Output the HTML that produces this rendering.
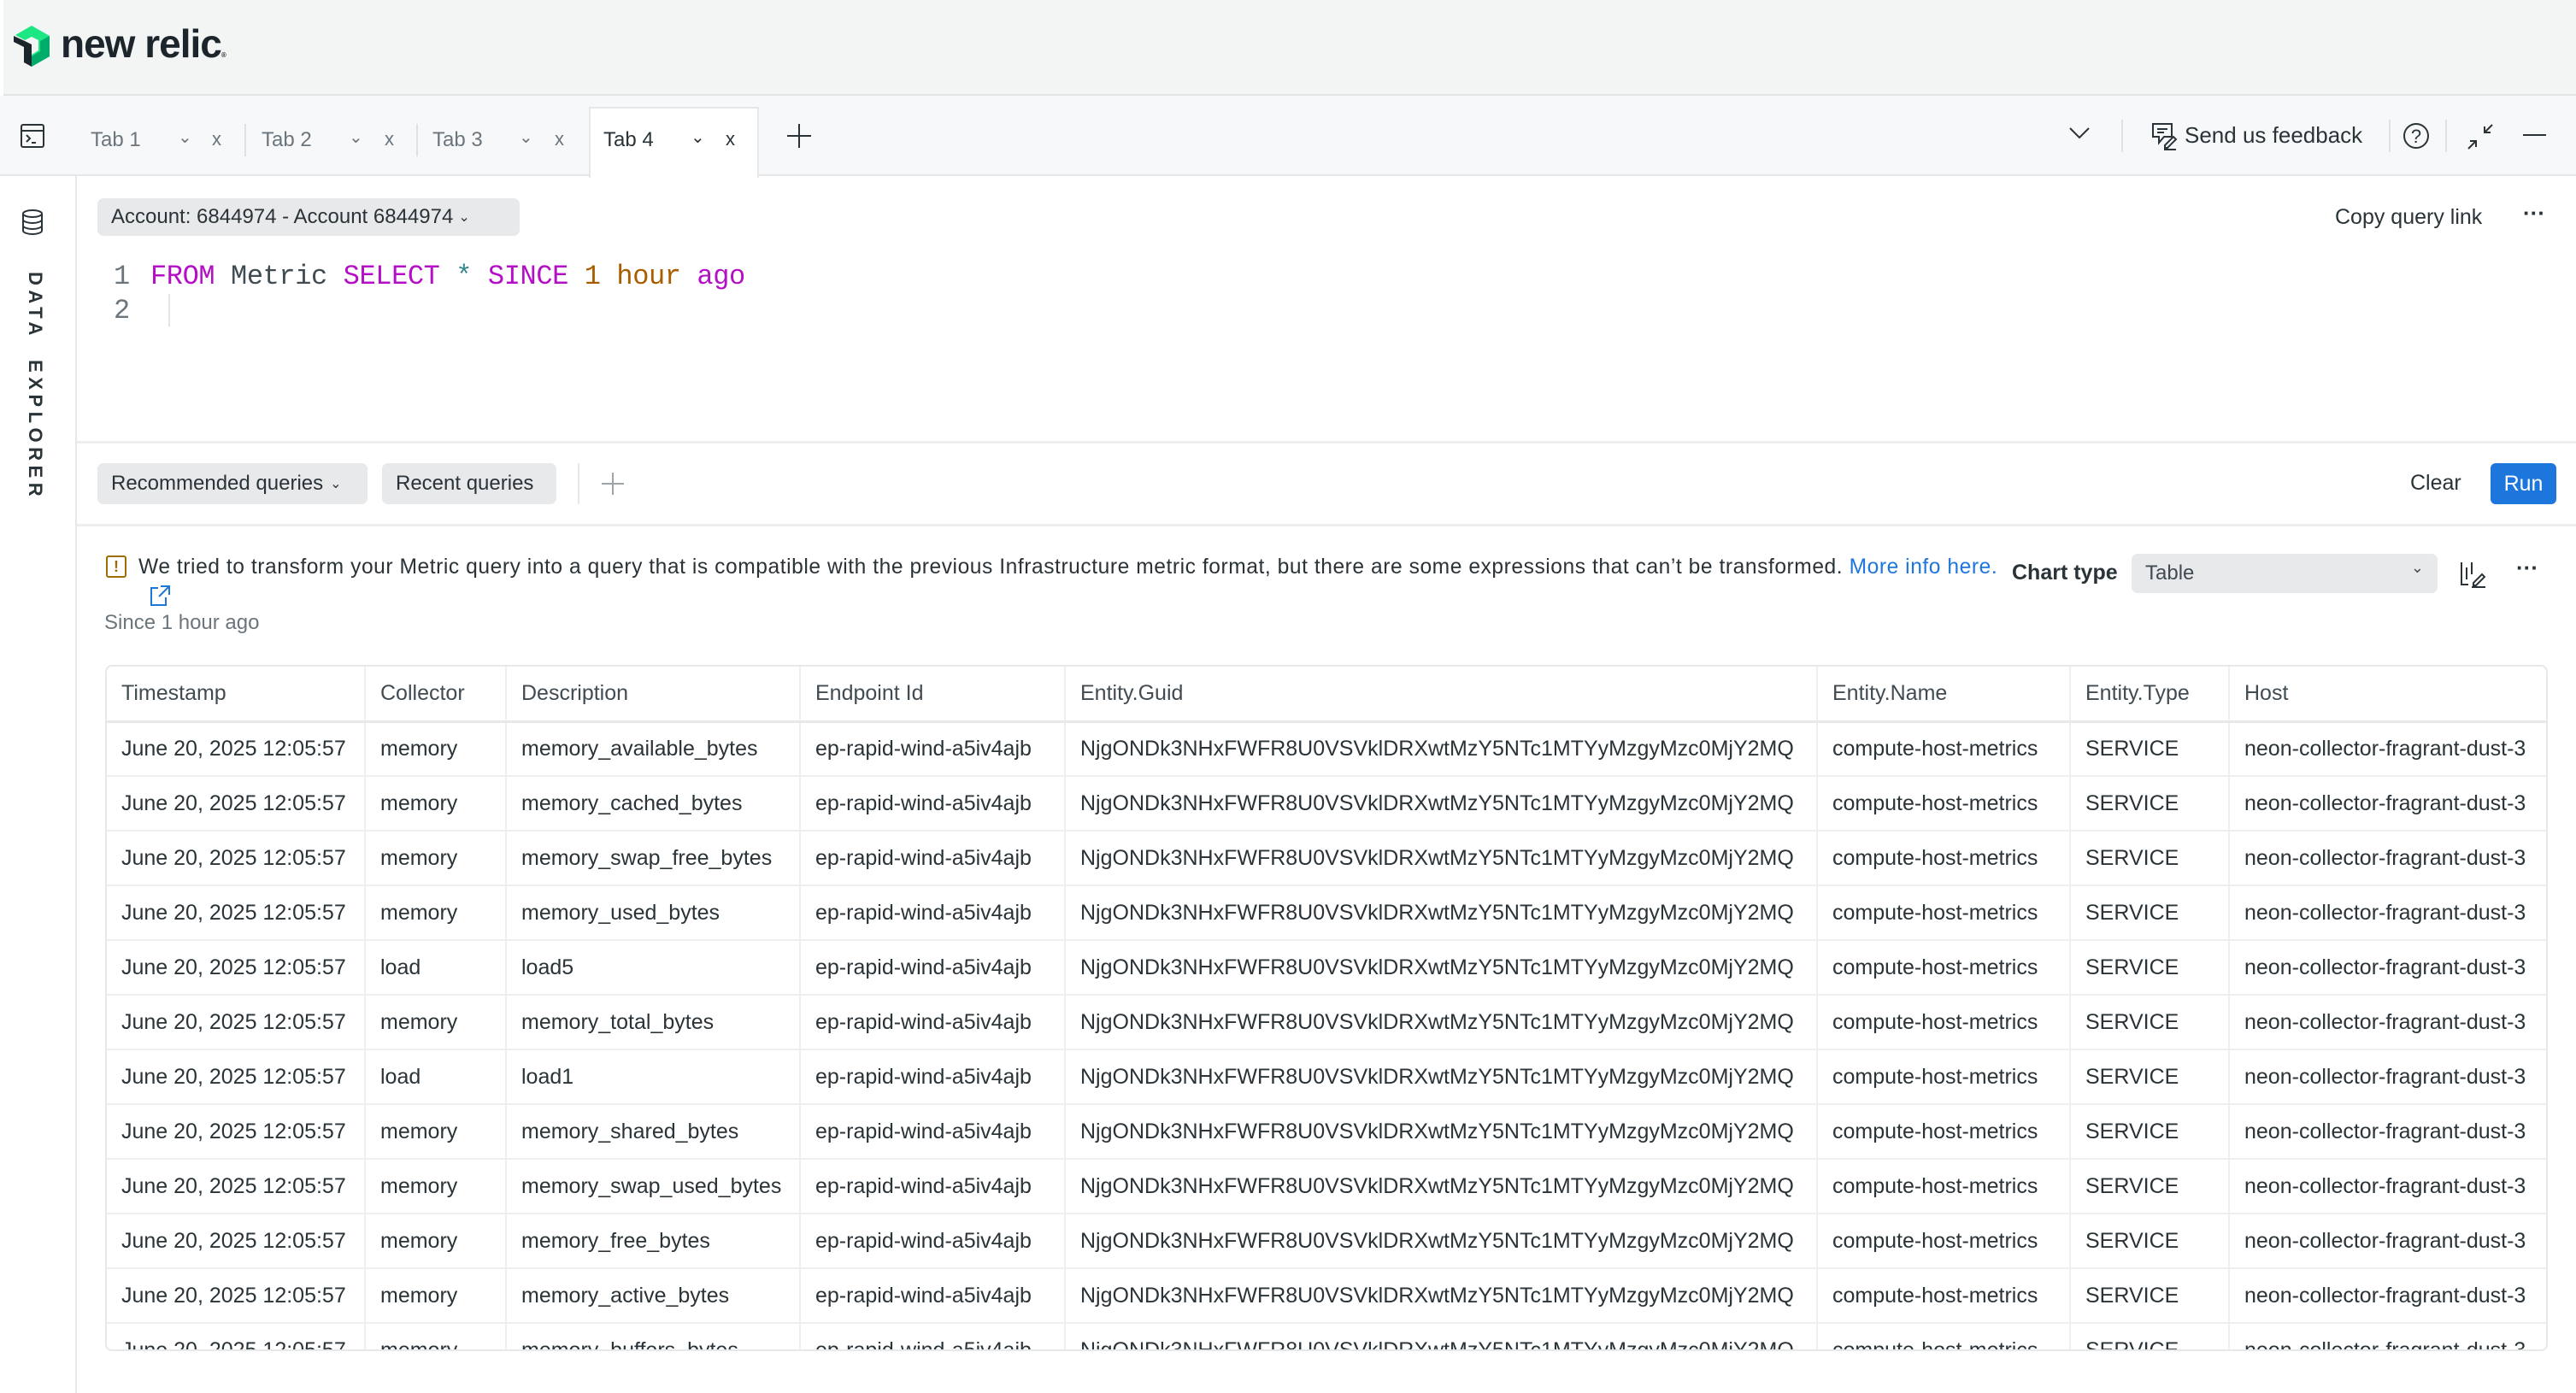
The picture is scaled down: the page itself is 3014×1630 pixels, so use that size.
<!DOCTYPE html>
<html><head><meta charset="utf-8"><style>
*{box-sizing:border-box;margin:0;padding:0}
body{width:3014px;height:1630px;overflow:hidden;background:#fff;font-family:"Liberation Sans",sans-serif;color:#293338;position:relative}
.a{position:absolute;white-space:nowrap}
.top{position:absolute;left:0;top:0;width:3014px;height:112px;background:#f3f4f4;border-bottom:2px solid #e3e4e4}
.tabs{position:absolute;left:0;top:112px;width:3014px;height:94px;background:#f7f8f9;border-bottom:2px solid #e6e7e8}
.tab{font-size:24px;color:#6b757c;top:150px}
.sep{position:absolute;width:2px;background:#dfe1e2}
.pill{position:absolute;background:#e8e9ea;border-radius:7px;font-size:24px;color:#293338;display:flex;align-items:center}
.mono{font-family:"Liberation Mono",monospace;font-size:32px}
table{border-collapse:collapse;font-size:25px;color:#293338}
td{height:64px;padding:0 0 0 17px;border-right:2px solid #eef0f0;border-bottom:2px solid #eef0f0;white-space:nowrap;overflow:hidden}
tr.h td{color:#414b52;border-bottom:3px solid #e6e8e9}
</style></head><body>
<div class="top"></div>
<div class="a" style="left:0;top:0;width:4px;height:1630px;background:#fff"></div>
<svg class="a" style="left:14px;top:28px" width="46" height="52" viewBox="0 0 46 52">
<polygon points="23,2 44,14 44,38 23,50 23,36 31,31 31,19 23,15 15,19 4,13" fill="#1ce783"/>
<polygon points="23,50 44,38 44,14 33,20 33,32 23,38" fill="#00ac69"/>
<polygon points="2,14 15,20 23,24 23,50 14,45 14,27 2,21" fill="#1d252c"/>
</svg>
<div class="a" style="left:71px;top:24px;font-size:46px;font-weight:bold;color:#1d252c;letter-spacing:-1px">new relic<span style="font-size:8px">®</span></div>

<div class="tabs"></div>
<svg class="a" style="left:22px;top:143px" width="32" height="32" viewBox="0 0 32 32" fill="none" stroke="#293338" stroke-width="2"><rect x="3" y="3" width="26" height="26" rx="2"/><line x1="3" y1="10" x2="29" y2="10"/><polyline points="9,15 13,19 9,23"/><line x1="15" y1="24" x2="20" y2="24"/></svg>
<div class="a tab" style="left:106px">Tab 1</div><div class="a tab" style="left:208px;font-size:20px;top:148px">⌄</div><div class="a tab" style="left:248px;font-size:22px">x</div>
<div class="sep" style="left:286px;top:145px;height:38px"></div>
<div class="a tab" style="left:306px">Tab 2</div><div class="a tab" style="left:408px;font-size:20px;top:148px">⌄</div><div class="a tab" style="left:450px;font-size:22px">x</div>
<div class="sep" style="left:487px;top:145px;height:38px"></div>
<div class="a tab" style="left:506px">Tab 3</div><div class="a tab" style="left:607px;font-size:20px;top:148px">⌄</div><div class="a tab" style="left:649px;font-size:22px">x</div>
<div class="a" style="left:689px;top:125px;width:199px;height:83px;background:#fff;border:2px solid #e6e7e8;border-bottom:none"></div>
<div class="a tab" style="left:706px;color:#293338">Tab 4</div><div class="a tab" style="left:808px;font-size:20px;top:148px;color:#293338">⌄</div><div class="a tab" style="left:849px;font-size:22px;color:#293338">x</div>
<svg class="a" style="left:920px;top:144px" width="30" height="30"><path d="M15 1V29M1 15H29" stroke="#293338" stroke-width="2"/></svg>

<svg class="a" style="left:2420px;top:148px" width="26" height="16"><path d="M2 2L13 13L24 2" fill="none" stroke="#293338" stroke-width="2"/></svg>
<div class="sep" style="left:2482px;top:140px;height:38px"></div>
<svg class="a" style="left:2516px;top:142px" width="34" height="34" viewBox="0 0 34 34" fill="none" stroke="#293338" stroke-width="2"><path d="M3 3H25V18H16L10 25V18H3Z"/><line x1="8" y1="9" x2="20" y2="9"/><line x1="8" y1="13" x2="16" y2="13"/><path d="M17 28L27 18L30 21L20 31H17Z"/><line x1="16" y1="33" x2="30" y2="33"/></svg>
<div class="a" style="left:2556px;top:143px;font-size:26px">Send us feedback</div>
<div class="sep" style="left:2795px;top:140px;height:38px"></div>
<svg class="a" style="left:2811px;top:143px" width="32" height="32"><circle cx="16" cy="16" r="14" fill="none" stroke="#293338" stroke-width="2"/><text x="16" y="24" font-size="22" text-anchor="middle" fill="#293338" font-family="Liberation Sans">?</text></svg>
<div class="sep" style="left:2861px;top:140px;height:38px"></div>
<svg class="a" style="left:2886px;top:144px" width="32" height="32" fill="none" stroke="#293338" stroke-width="2"><path d="M30 2L21 11M21 4V11H28M2 30L11 21M4 21H11V28"/></svg>
<div class="a" style="left:2952px;top:157px;width:27px;height:2px;background:#293338"></div>

<div class="a" style="left:88px;top:206px;width:2px;height:1424px;background:#e6e7e8"></div>
<svg class="a" style="left:24px;top:244px" width="28" height="32" fill="none" stroke="#293338" stroke-width="2"><ellipse cx="14" cy="6" rx="11" ry="4"/><path d="M3 6V26C3 28 8 30 14 30C20 30 25 28 25 26V6M3 13C3 15 8 17 14 17C20 17 25 15 25 13M3 20C3 22 8 24 14 24C20 24 25 22 25 20"/></svg>
<div class="a" style="left:54px;top:318px;transform-origin:0 0;transform:rotate(90deg);font-size:22px;font-weight:bold;letter-spacing:5.5px;color:#293338">DATA&nbsp; EXPLORER</div>

<div class="pill" style="left:114px;top:232px;width:494px;height:44px;padding-left:16px">Account: 6844974 - Account 6844974 <span style="font-size:16px;margin-left:6px">⌄</span></div>
<div class="a" style="left:2732px;top:240px;font-size:25px">Copy query link</div>
<div class="a" style="left:2952px;top:234px;font-size:26px;font-weight:bold">···</div>

<div class="a mono" style="left:133px;top:305px;color:#6b757c">1</div>
<div class="a mono" style="left:133px;top:345px;color:#6b757c">2</div>
<div class="a mono" style="left:176px;top:305px;color:#414b52;letter-spacing:-0.4px"><span style="color:#b40fc6">FROM</span> Metric <span style="color:#b40fc6">SELECT</span> <span style="color:#35888f">*</span> <span style="color:#b40fc6">SINCE</span> <span style="color:#a85d00">1</span> <span style="color:#a85d00">hour</span> <span style="color:#b40fc6">ago</span></div>
<div class="a" style="left:197px;top:344px;width:2px;height:38px;background:#e3e4e4"></div>

<div class="a" style="left:90px;top:516px;width:2924px;height:3px;background:#edeeee"></div>
<div class="pill" style="left:114px;top:542px;width:316px;height:48px;padding-left:16px">Recommended queries <span style="font-size:16px;margin-left:8px">⌄</span></div>
<div class="pill" style="left:447px;top:542px;width:204px;height:48px;padding-left:16px">Recent queries</div>
<div class="sep" style="left:676px;top:542px;height:48px;background:#e6e7e8"></div>
<svg class="a" style="left:703px;top:552px" width="28" height="28"><path d="M14 1V27M1 14H27" stroke="#9ea5a9" stroke-width="2"/></svg>
<div class="a" style="left:2820px;top:551px;font-size:25px">Clear</div>
<div class="a" style="left:2914px;top:542px;width:77px;height:48px;background:#1d76db;border-radius:6px;color:#fff;font-size:25px;text-align:center;line-height:48px">Run</div>
<div class="a" style="left:90px;top:613px;width:2924px;height:3px;background:#edeeee"></div>

<div class="a" style="left:124px;top:650px;width:24px;height:26px;border:2px solid #9c6d00;border-radius:3px;color:#9c6d00;font-size:18px;text-align:center;line-height:22px;font-weight:bold">!</div>
<div class="a" style="left:162px;top:650px;font-size:24.6px;letter-spacing:0.55px">We tried to transform your Metric query into a query that is compatible with the previous Infrastructure metric format, but there are some expressions that can’t be transformed. <span style="color:#1d76db">More info here.</span></div>
<svg class="a" style="left:174px;top:684px" width="26" height="26" fill="none" stroke="#1d76db" stroke-width="2"><path d="M11 4H3V24H20V15M14 2H24V12M24 2L12 14"/></svg>
<div class="a" style="left:2354px;top:656px;font-size:25px;font-weight:bold">Chart type</div>
<div class="pill" style="left:2494px;top:648px;width:358px;height:46px;padding-left:16px;color:#414b52">Table<span style="position:absolute;right:16px;font-size:18px;top:6px">⌄</span></div>
<svg class="a" style="left:2878px;top:656px" width="32" height="32" fill="none" stroke="#293338" stroke-width="2"><path d="M2 2V28H10M8 8V22M14 2V16M19 29L29 19L26 16L16 26V29ZM14 31H30"/></svg>
<div class="a" style="left:2944px;top:649px;font-size:26px;font-weight:bold">···</div>
<div class="a" style="left:122px;top:715px;font-size:24px;color:#6b757c">Since 1 hour ago</div>

<div class="a" style="left:123px;top:778px;width:2858px;height:803px;border:2px solid #e6e8e9;border-radius:8px;overflow:hidden">
<table style="width:2900px;table-layout:fixed">
<colgroup><col style="width:302px"><col style="width:165px"><col style="width:344px"><col style="width:310px"><col style="width:880px"><col style="width:296px"><col style="width:186px"><col style="width:417px"></colgroup>
<tr class="h"><td>Timestamp</td><td>Collector</td><td>Description</td><td>Endpoint Id</td><td>Entity.Guid</td><td>Entity.Name</td><td>Entity.Type</td><td>Host</td></tr>
<tr><td>June 20, 2025 12:05:57</td><td>memory</td><td>memory_available_bytes</td><td>ep-rapid-wind-a5iv4ajb</td><td>NjgONDk3NHxFWFR8U0VSVklDRXwtMzY5NTc1MTYyMzgyMzc0MjY2MQ</td><td>compute-host-metrics</td><td>SERVICE</td><td>neon-collector-fragrant-dust-3</td></tr>
<tr><td>June 20, 2025 12:05:57</td><td>memory</td><td>memory_cached_bytes</td><td>ep-rapid-wind-a5iv4ajb</td><td>NjgONDk3NHxFWFR8U0VSVklDRXwtMzY5NTc1MTYyMzgyMzc0MjY2MQ</td><td>compute-host-metrics</td><td>SERVICE</td><td>neon-collector-fragrant-dust-3</td></tr>
<tr><td>June 20, 2025 12:05:57</td><td>memory</td><td>memory_swap_free_bytes</td><td>ep-rapid-wind-a5iv4ajb</td><td>NjgONDk3NHxFWFR8U0VSVklDRXwtMzY5NTc1MTYyMzgyMzc0MjY2MQ</td><td>compute-host-metrics</td><td>SERVICE</td><td>neon-collector-fragrant-dust-3</td></tr>
<tr><td>June 20, 2025 12:05:57</td><td>memory</td><td>memory_used_bytes</td><td>ep-rapid-wind-a5iv4ajb</td><td>NjgONDk3NHxFWFR8U0VSVklDRXwtMzY5NTc1MTYyMzgyMzc0MjY2MQ</td><td>compute-host-metrics</td><td>SERVICE</td><td>neon-collector-fragrant-dust-3</td></tr>
<tr><td>June 20, 2025 12:05:57</td><td>load</td><td>load5</td><td>ep-rapid-wind-a5iv4ajb</td><td>NjgONDk3NHxFWFR8U0VSVklDRXwtMzY5NTc1MTYyMzgyMzc0MjY2MQ</td><td>compute-host-metrics</td><td>SERVICE</td><td>neon-collector-fragrant-dust-3</td></tr>
<tr><td>June 20, 2025 12:05:57</td><td>memory</td><td>memory_total_bytes</td><td>ep-rapid-wind-a5iv4ajb</td><td>NjgONDk3NHxFWFR8U0VSVklDRXwtMzY5NTc1MTYyMzgyMzc0MjY2MQ</td><td>compute-host-metrics</td><td>SERVICE</td><td>neon-collector-fragrant-dust-3</td></tr>
<tr><td>June 20, 2025 12:05:57</td><td>load</td><td>load1</td><td>ep-rapid-wind-a5iv4ajb</td><td>NjgONDk3NHxFWFR8U0VSVklDRXwtMzY5NTc1MTYyMzgyMzc0MjY2MQ</td><td>compute-host-metrics</td><td>SERVICE</td><td>neon-collector-fragrant-dust-3</td></tr>
<tr><td>June 20, 2025 12:05:57</td><td>memory</td><td>memory_shared_bytes</td><td>ep-rapid-wind-a5iv4ajb</td><td>NjgONDk3NHxFWFR8U0VSVklDRXwtMzY5NTc1MTYyMzgyMzc0MjY2MQ</td><td>compute-host-metrics</td><td>SERVICE</td><td>neon-collector-fragrant-dust-3</td></tr>
<tr><td>June 20, 2025 12:05:57</td><td>memory</td><td>memory_swap_used_bytes</td><td>ep-rapid-wind-a5iv4ajb</td><td>NjgONDk3NHxFWFR8U0VSVklDRXwtMzY5NTc1MTYyMzgyMzc0MjY2MQ</td><td>compute-host-metrics</td><td>SERVICE</td><td>neon-collector-fragrant-dust-3</td></tr>
<tr><td>June 20, 2025 12:05:57</td><td>memory</td><td>memory_free_bytes</td><td>ep-rapid-wind-a5iv4ajb</td><td>NjgONDk3NHxFWFR8U0VSVklDRXwtMzY5NTc1MTYyMzgyMzc0MjY2MQ</td><td>compute-host-metrics</td><td>SERVICE</td><td>neon-collector-fragrant-dust-3</td></tr>
<tr><td>June 20, 2025 12:05:57</td><td>memory</td><td>memory_active_bytes</td><td>ep-rapid-wind-a5iv4ajb</td><td>NjgONDk3NHxFWFR8U0VSVklDRXwtMzY5NTc1MTYyMzgyMzc0MjY2MQ</td><td>compute-host-metrics</td><td>SERVICE</td><td>neon-collector-fragrant-dust-3</td></tr>
<tr><td>June 20, 2025 12:05:57</td><td>memory</td><td>memory_buffers_bytes</td><td>ep-rapid-wind-a5iv4ajb</td><td>NjgONDk3NHxFWFR8U0VSVklDRXwtMzY5NTc1MTYyMzgyMzc0MjY2MQ</td><td>compute-host-metrics</td><td>SERVICE</td><td>neon-collector-fragrant-dust-3</td></tr>
</table>
</div>
</body></html>
